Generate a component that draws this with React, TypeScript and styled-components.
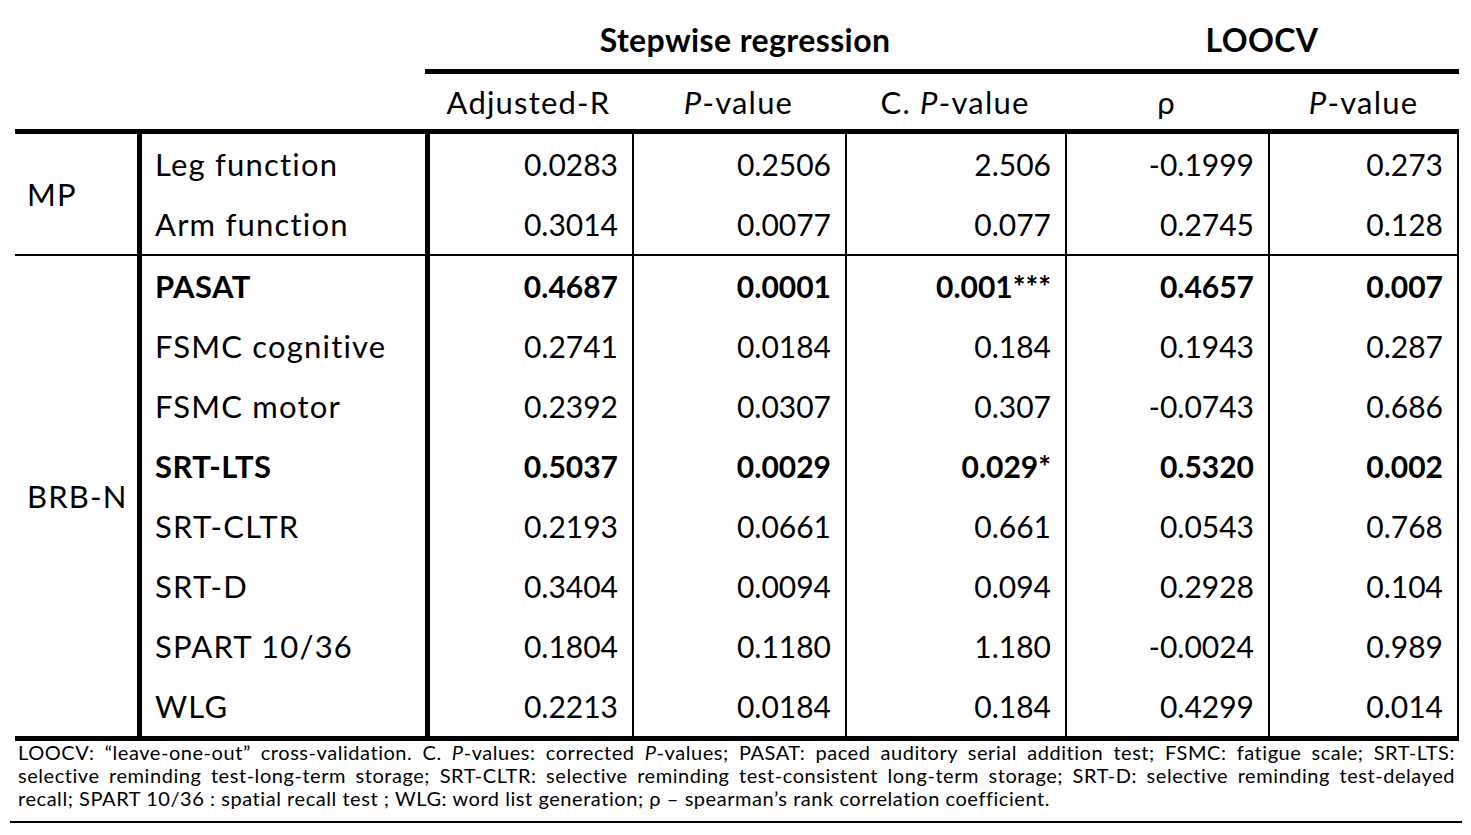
import React from 'react'
import styled, { createGlobalStyle } from 'styled-components'

const GlobalStyle = createGlobalStyle`
  html, body {
    margin: 0;
    padding: 0;
    background: #fff;
  }
  body {
    font-family: Lato, 'Open Sans', sans-serif;
    color: #000;
  }
`

type Rule = 'thin' | 'thick' | undefined

const ruleWidth = (rule: Rule) => (rule === 'thick' ? '5px' : rule === 'thin' ? '2px' : '0')

const Page = styled.div`
  width: 1471px;
  height: 835px;
  overflow: hidden;
  padding-left: 10px;
  box-sizing: border-box;
`

const Table = styled.table`
  border-collapse: separate;
  border-spacing: 0;
  table-layout: fixed;
  width: 1444px;
  margin-left: 5px;
  font-size: 31px;
  line-height: 36px;
  letter-spacing: 1.2px;
`

const GroupHead = styled.th`
  height: 74px;
  box-sizing: border-box;
  padding: 0 0 11px;
  font-size: 32px;
  font-weight: 700;
  letter-spacing: 0.4px;
  text-align: center;
  vertical-align: bottom;
  border-bottom: 5px solid #000;
`

const BlankHead = styled.th<{ $rule?: Rule }>`
  padding: 0;
  border-bottom: ${({ $rule }) => ruleWidth($rule)} solid #000;
`

const ColHead = styled.th`
  height: 60px;
  box-sizing: border-box;
  padding: 0;
  font-weight: 400;
  text-align: center;
  vertical-align: middle;
  border-bottom: 5px solid #000;
`

const GroupCell = styled.td<{ $rule?: Rule }>`
  padding: 0 0 0 12px;
  text-align: left;
  vertical-align: middle;
  border-bottom: ${({ $rule }) => ruleWidth($rule)} solid #000;
`

const LabelCell = styled.td<{ $rule?: Rule; $bold?: boolean }>`
  height: 60px;
  box-sizing: content-box;
  padding: 0 0 0 13px;
  text-align: left;
  vertical-align: middle;
  white-space: nowrap;
  letter-spacing: ${({ $bold }) => ($bold ? '0.4px' : '1.2px')};
  font-weight: ${({ $bold }) => ($bold ? 700 : 400)};
  border-left: 5px solid #000;
  border-bottom: ${({ $rule }) => ruleWidth($rule)} solid #000;
`

const NumCell = styled.td<{ $rule?: Rule; $bold?: boolean; $first?: boolean; $last?: boolean }>`
  padding: 0 14px 0 0;
  font-size: 30px;
  letter-spacing: 0;
  text-align: right;
  vertical-align: middle;
  white-space: nowrap;
  font-weight: ${({ $bold }) => ($bold ? 700 : 400)};
  border-left: ${({ $first }) => ($first ? '5px' : '2px')} solid #000;
  border-right: ${({ $last }) => ($last ? '2px' : '0')} solid #000;
  border-bottom: ${({ $rule }) => ruleWidth($rule)} solid #000;
`

const Footnote = styled.div`
  width: 1452px;
  box-sizing: border-box;
  padding: 0 7px 11px 8px;
  border-bottom: 2px solid #000;
  font-size: 20px;
  line-height: 23px;
  letter-spacing: 0.55px;
`

const NoteLine = styled.span<{ $justify?: boolean }>`
  display: block;
  text-align: ${({ $justify }) => ($justify ? 'justify' : 'left')};
  text-align-last: ${({ $justify }) => ($justify ? 'justify' : 'auto')};
`

type DataRow = { label: string; values: string[]; bold?: boolean }
type Group = { name: string; rows: DataRow[] }

const groups: Group[] = [
  {
    name: 'MP',
    rows: [
      { label: 'Leg function', values: ['0.0283', '0.2506', '2.506', '-0.1999', '0.273'] },
      { label: 'Arm function', values: ['0.3014', '0.0077', '0.077', '0.2745', '0.128'] },
    ],
  },
  {
    name: 'BRB-N',
    rows: [
      { label: 'PASAT', values: ['0.4687', '0.0001', '0.001***', '0.4657', '0.007'], bold: true },
      { label: 'FSMC cognitive', values: ['0.2741', '0.0184', '0.184', '0.1943', '0.287'] },
      { label: 'FSMC motor', values: ['0.2392', '0.0307', '0.307', '-0.0743', '0.686'] },
      { label: 'SRT-LTS', values: ['0.5037', '0.0029', '0.029*', '0.5320', '0.002'], bold: true },
      { label: 'SRT-CLTR', values: ['0.2193', '0.0661', '0.661', '0.0543', '0.768'] },
      { label: 'SRT-D', values: ['0.3404', '0.0094', '0.094', '0.2928', '0.104'] },
      { label: 'SPART 10/36', values: ['0.1804', '0.1180', '1.180', '-0.0024', '0.989'] },
      { label: 'WLG', values: ['0.2213', '0.0184', '0.184', '0.4299', '0.014'] },
    ],
  },
]

const colWidths = [122, 288, 207, 213, 220, 203, 191]

const App: React.FC = () => {
  return (
    <Page>
      <GlobalStyle />
      <Table>
        <colgroup>
          {colWidths.map((w, i) => (
            <col key={i} style={{ width: w }} />
          ))}
        </colgroup>
        <thead>
          <tr>
            <BlankHead colSpan={2} />
            <GroupHead colSpan={3}>Stepwise regression</GroupHead>
            <GroupHead colSpan={2}>LOOCV</GroupHead>
          </tr>
          <tr>
            <BlankHead colSpan={2} $rule="thick" />
            <ColHead>Adjusted-R</ColHead>
            <ColHead>
              <i>P</i>-value
            </ColHead>
            <ColHead>
              C. <i>P</i>-value
            </ColHead>
            <ColHead>ρ</ColHead>
            <ColHead>
              <i>P</i>-value
            </ColHead>
          </tr>
        </thead>
        <tbody>
          {groups.map((group, gi) => {
            const groupRule: Rule = gi === groups.length - 1 ? 'thick' : 'thin'
            return group.rows.map((row, ri) => {
              const rule: Rule = ri === group.rows.length - 1 ? groupRule : undefined
              return (
                <tr key={row.label}>
                  {ri === 0 && (
                    <GroupCell rowSpan={group.rows.length} $rule={groupRule}>
                      {group.name}
                    </GroupCell>
                  )}
                  <LabelCell $rule={rule} $bold={row.bold}>
                    {row.label}
                  </LabelCell>
                  {row.values.map((v, vi) => (
                    <NumCell
                      key={vi}
                      $rule={rule}
                      $bold={row.bold}
                      $first={vi === 0}
                      $last={vi === row.values.length - 1}
                    >
                      {v}
                    </NumCell>
                  ))}
                </tr>
              )
            })
          })}
        </tbody>
      </Table>
      <Footnote>
        <NoteLine $justify>
          LOOCV: “leave-one-out” cross-validation. C. <i>P</i>-values: corrected <i>P</i>-values; PASAT: paced
          auditory serial addition test; FSMC: fatigue scale; SRT-LTS:
        </NoteLine>
        <NoteLine $justify>
          selective reminding test-long-term storage; SRT-CLTR: selective reminding test-consistent long-term
          storage; SRT-D: selective reminding test-delayed
        </NoteLine>
        <NoteLine>
          recall; SPART 10/36 : spatial recall test ; WLG: word list generation; ρ – spearman’s rank correlation
          coefficient.
        </NoteLine>
      </Footnote>
    </Page>
  )
}

export default App
